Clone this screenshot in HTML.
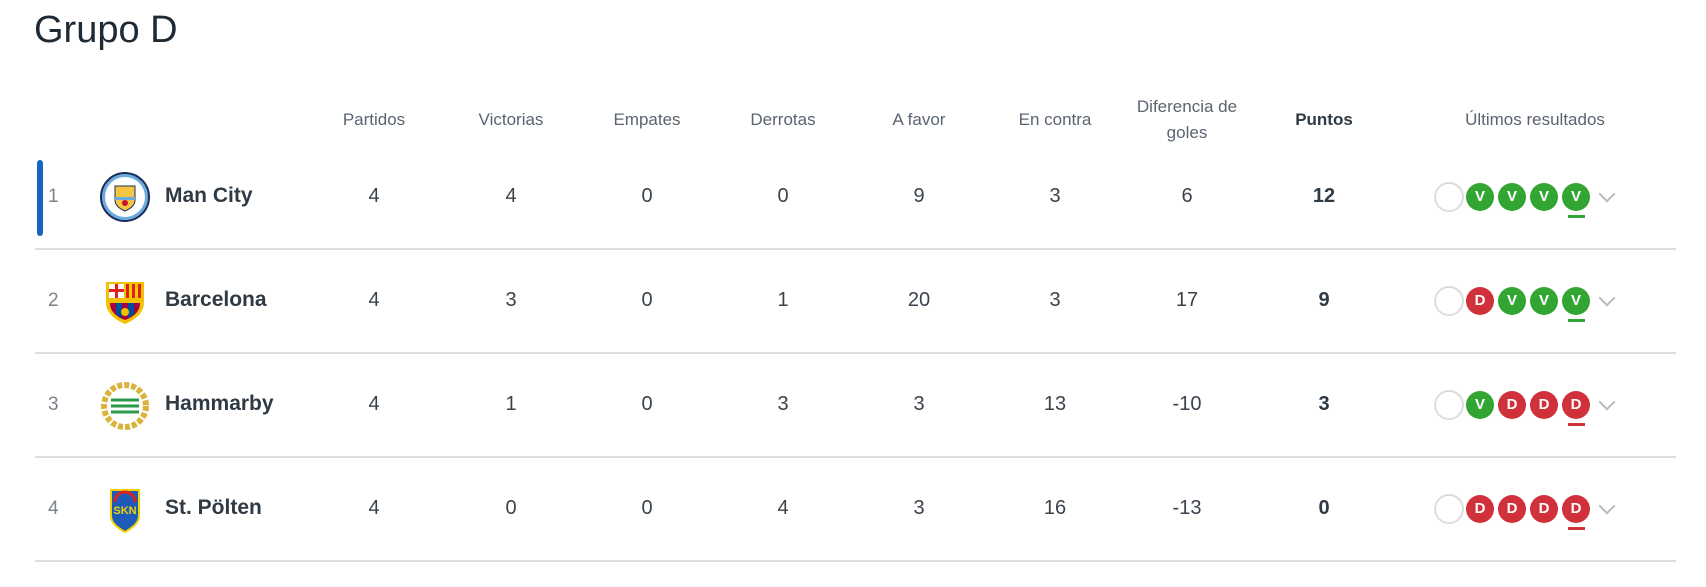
<!DOCTYPE html>
<html><head><meta charset="utf-8"><style>
body{margin:0;width:1706px;height:587px;background:#fff;font-family:"Liberation Sans",sans-serif;position:relative;overflow:hidden;color:#2b3440}
.a{position:absolute}
.h{position:absolute;font-size:17px;color:#5a6470;text-align:center;width:160px;margin-left:-80px;line-height:26px}
.n{position:absolute;font-size:20px;color:#3a424c;text-align:center;width:80px;margin-left:-40px}
.line{position:absolute;left:35px;width:1641px;height:2px;background:#dedede}
.rk{position:absolute;left:48px;font-size:19px;color:#7a828c}
.tn{position:absolute;left:165px;font-size:21px;font-weight:bold;color:#2f3a44}
.c{position:absolute;width:28px;height:28px;border-radius:50%;color:#fff;font-weight:bold;font-size:15px;text-align:center;line-height:28px}
.e{border:2px solid #ddd;width:26px;height:26px;background:#fff}
.v{background:#33a532}.d{background:#d0313b}
.u{position:absolute;width:17px;height:3px}
.ch{position:absolute;width:10px;height:10px;border-right:2px solid #bbb;border-bottom:2px solid #bbb;transform:rotate(45deg)}
</style></head><body>
<div class="a" style="left:34px;top:9px;font-size:38px;color:#1e2a36">Grupo D</div>
<div class="h" style="left:374px;top:107px">Partidos</div>
<div class="h" style="left:511px;top:107px">Victorias</div>
<div class="h" style="left:647px;top:107px">Empates</div>
<div class="h" style="left:783px;top:107px">Derrotas</div>
<div class="h" style="left:919px;top:107px">A favor</div>
<div class="h" style="left:1055px;top:107px">En contra</div>
<div class="h" style="left:1187px;top:94px">Diferencia de<br>goles</div>
<div class="h" style="left:1324px;top:107px;font-weight:bold;color:#2f3a44">Puntos</div>
<div class="h" style="left:1535px;top:107px;width:240px;margin-left:-120px">Últimos resultados</div>
<div class="a" style="left:37px;top:160px;width:6px;height:76px;background:#1565c0;border-radius:3px"></div>

<div id="rows"></div>
<script>
var d=[["1","Man City",[4,4,0,0,9,3,6,12],"VVVV"],["2","Barcelona",[4,3,0,1,20,3,17,9],"DVVV"],["3","Hammarby",[4,1,0,3,3,13,-10,3],"VDDD"],["4","St. Pölten",[4,0,0,4,3,16,-13,0],"DDDD"]];
var cx=[374,511,647,783,919,1055,1187,1324];
var logos=[
'<svg width="50" height="50" viewBox="0 0 50 50"><circle cx="25" cy="25" r="24" fill="#6cabdd" stroke="#1c2c5b" stroke-width="2"/><circle cx="25" cy="25" r="20" fill="#fff"/><path d="M15 14h20v14c0 6-5 9-10 11-5-2-10-5-10-11z" fill="#f4c542" stroke="#1c2c5b"/><rect x="15" y="25" width="20" height="3" fill="#6cabdd"/><circle cx="25" cy="31" r="3" fill="#c8102e"/></svg>',
'<svg width="50" height="50" viewBox="0 0 50 50"><path d="M6 6h38v20c0 12-10 18-19 22C16 44 6 38 6 26z" fill="#f2c200"/><rect x="9" y="8" width="15" height="14" fill="#fff"/><rect x="15" y="8" width="3" height="14" fill="#d22"/><rect x="9" y="13" width="15" height="3" fill="#d22"/><rect x="26" y="8" width="15" height="14" fill="#d22"/><rect x="29" y="8" width="3" height="14" fill="#fc0"/><rect x="35" y="8" width="3" height="14" fill="#fc0"/><path d="M10 27h30v0c0 9-7 14-15 17-8-3-15-8-15-17z" fill="#a50044"/><path d="M16 27h6v15l-6-4zM28 27h6v11l-6 4z" fill="#004d98"/><circle cx="25" cy="36" r="4" fill="#f2c200"/></svg>',
'<svg width="50" height="50" viewBox="0 0 50 50"><circle cx="25" cy="26" r="21" fill="none" stroke="#d9b33a" stroke-width="6" stroke-dasharray="5 2"/><circle cx="25" cy="26" r="14" fill="#fff"/><path d="M11 20h28M11 26h28M11 32h28" stroke="#2a9a4a" stroke-width="3"/></svg>',
'<svg width="50" height="50" viewBox="0 0 50 50"><path d="M11 6h28v26c0 7-7 12-14 16-7-4-14-9-14-16z" fill="#1e5bb8" stroke="#f2d200" stroke-width="2"/><path d="M15 18a10 10 0 0 1 20 0" fill="none" stroke="#d22" stroke-width="3"/><text x="25" y="30" font-size="11" font-weight="bold" fill="#f2d200" text-anchor="middle" font-family="Liberation Sans">SKN</text></svg>'];
var h='';
d.forEach(function(r,i){var y=197+i*104;
h+='<div class="rk" style="top:'+(y-11)+'px">'+r[0]+'</div>';
h+='<div class="a" style="left:100px;top:'+(y-25)+'px">'+logos[i]+'</div>';
h+='<div class="tn" style="top:'+(y-13)+'px">'+r[1]+'</div>';
r[2].forEach(function(v,j){h+='<div class="n" style="left:'+cx[j]+'px;top:'+(y-12)+'px;'+(j==7?'font-weight:bold;color:#2f3a44':'')+'">'+v+'</div>';});
h+='<div class="c e" style="left:1434px;top:'+(y-15)+'px"></div>';
for(var k=0;k<4;k++){var t=r[3][k];h+='<div class="c '+(t=='V'?'v':'d')+'" style="left:'+(1466+k*32)+'px;top:'+(y-14)+'px">'+t+'</div>';}
var col=r[3][3]=='V'?'#33a532':'#d0313b';
h+='<div class="u" style="left:1568px;top:'+(y+18)+'px;background:'+col+'"></div>';
h+='<div class="ch" style="left:1601px;top:'+(y-9)+'px"></div>';
h+='<div class="line" style="top:'+(y+51)+'px"></div>';
});
document.getElementById('rows').innerHTML=h;
</script>
</body></html>
